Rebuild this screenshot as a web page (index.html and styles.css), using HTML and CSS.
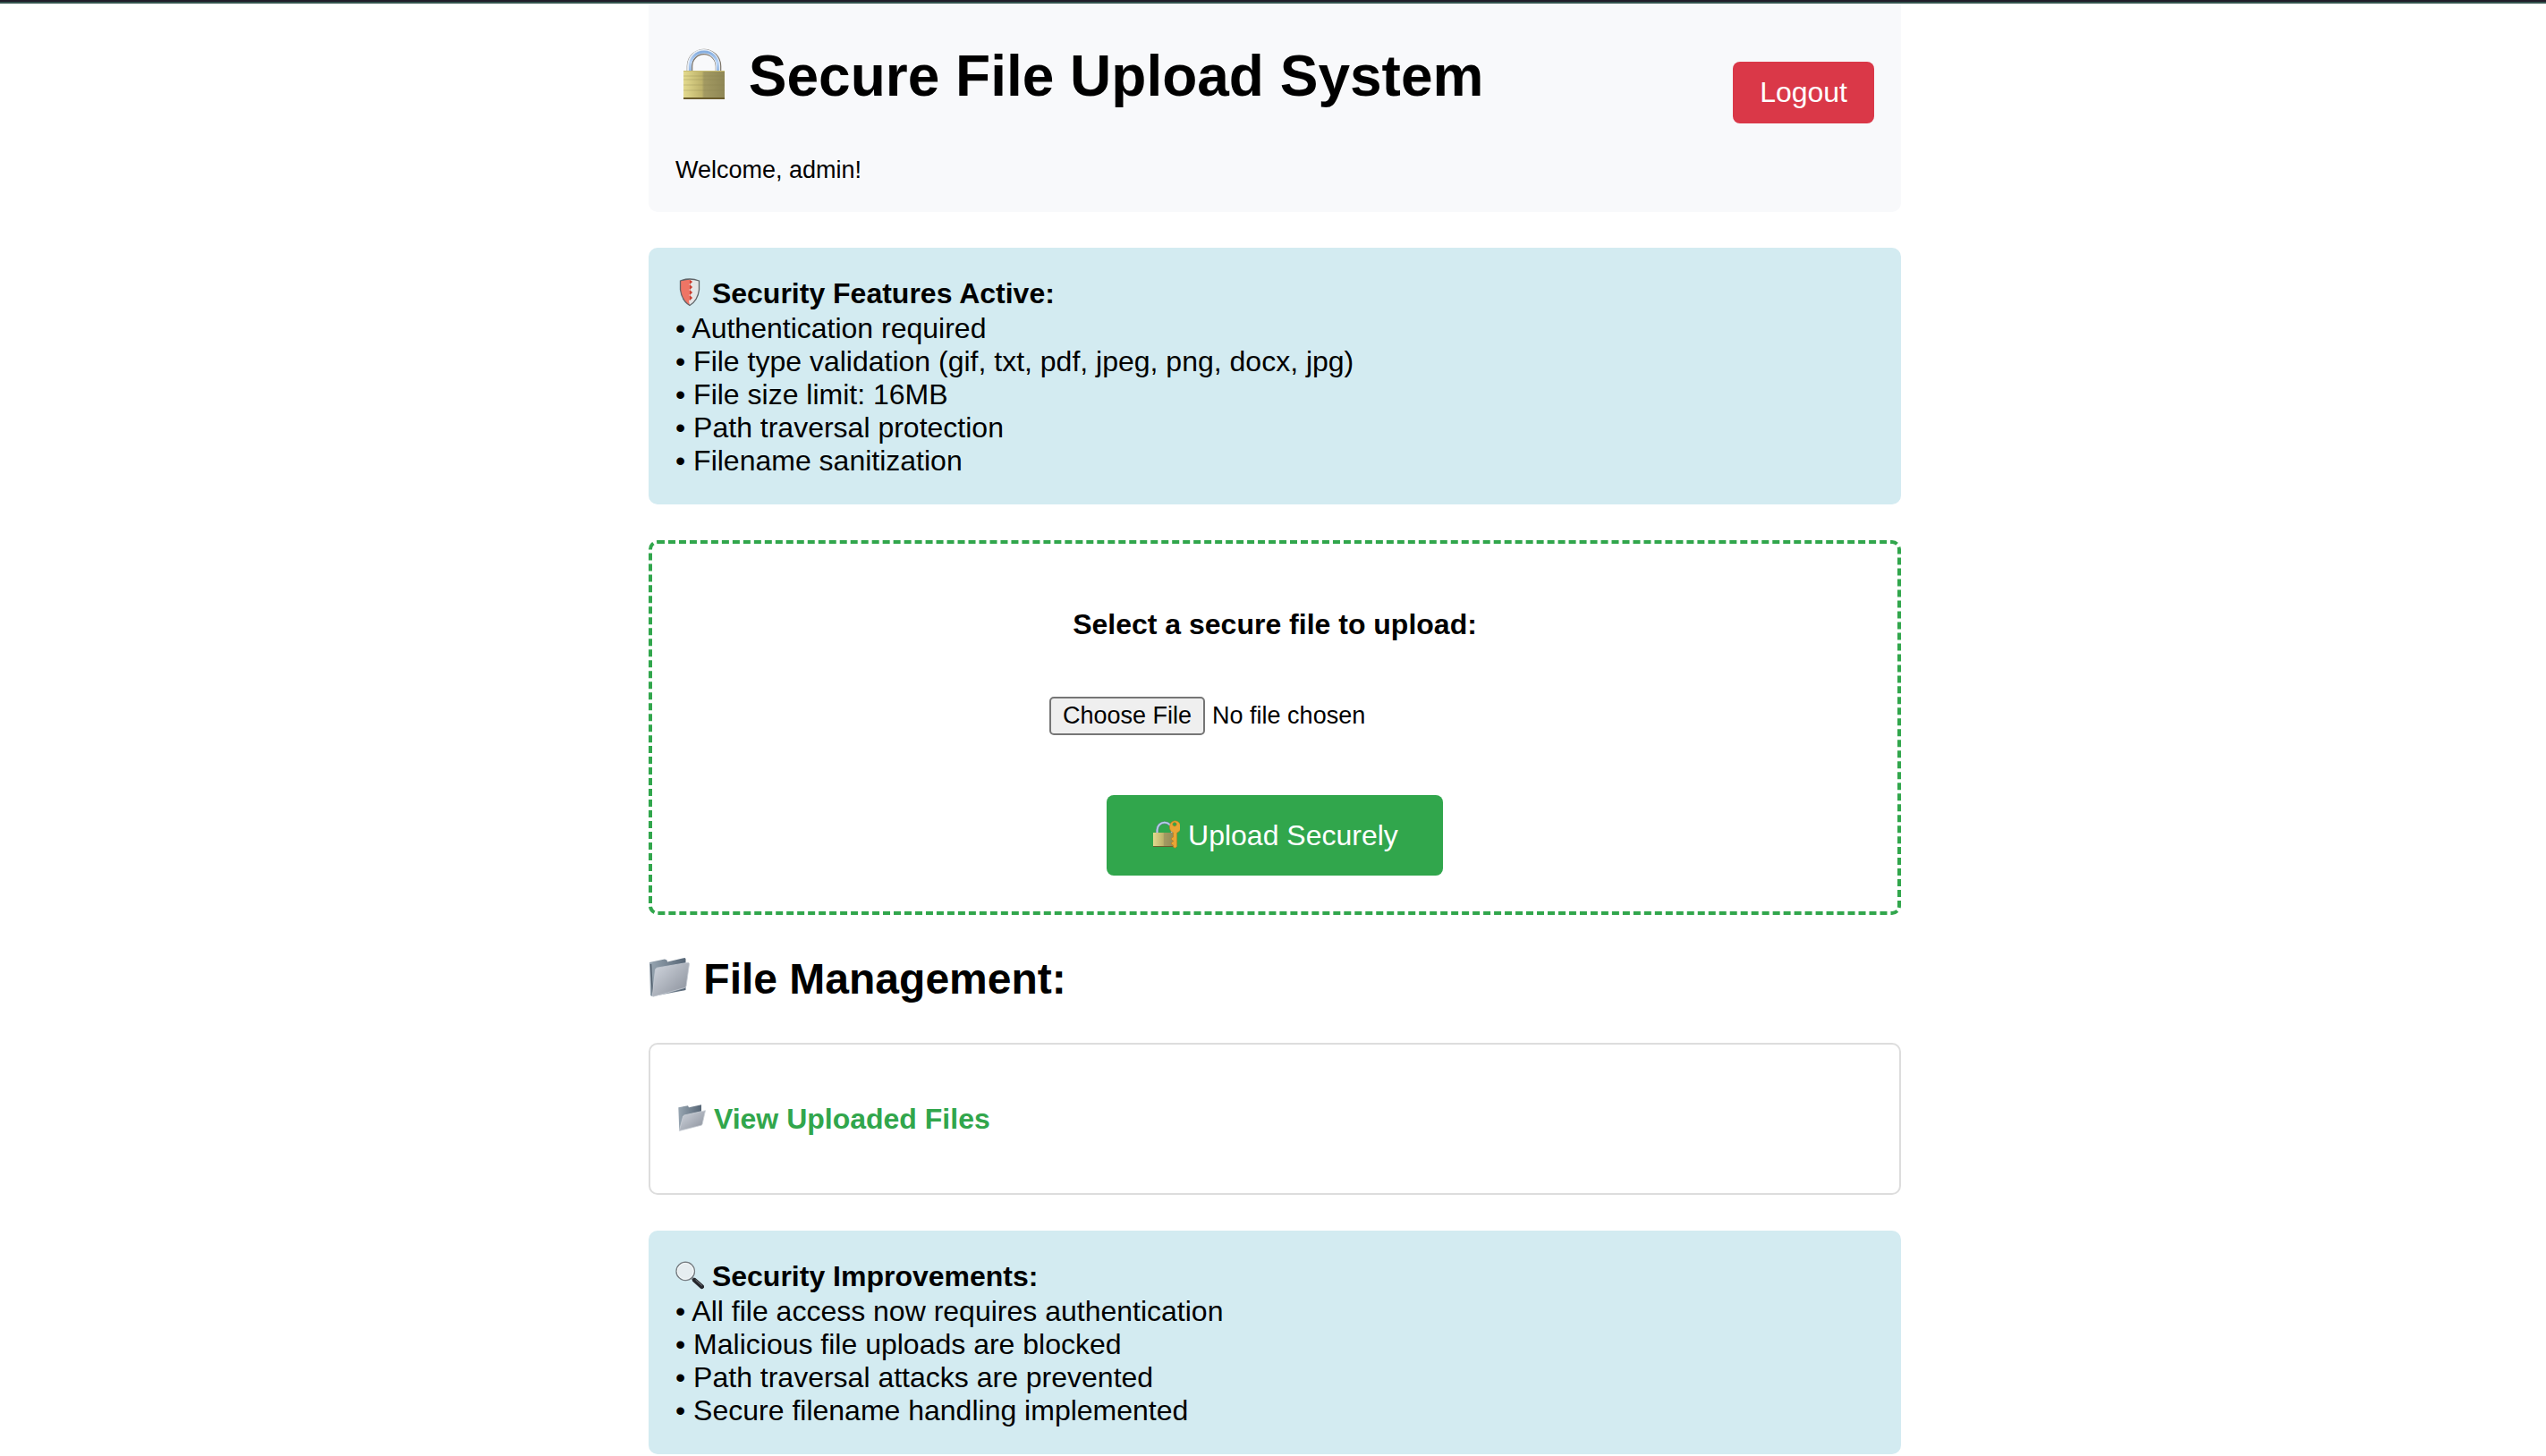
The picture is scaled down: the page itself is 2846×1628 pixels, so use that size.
FILE: index.html
```html
<!DOCTYPE html>
<html lang="en">
<head>
<meta charset="utf-8">
<meta name="viewport" content="width=device-width, initial-scale=1">
<title>Secure File Upload System</title>
<link rel="stylesheet" href="styles.css">
</head>
<body>
<div class="topbar"></div>
<main class="container">
  <header class="header">
    <div>
      <h1 class="title"><svg class="icon" viewBox="0 0 64 64" aria-hidden="true">
        <defs>
          <linearGradient id="brass" x1="0" x2="1" y1="0" y2="0"><stop offset="0" stop-color="#e3da8e"/><stop offset=".45" stop-color="#bdb26b"/><stop offset=".5" stop-color="#a39a62"/><stop offset="1" stop-color="#8f8755"/></linearGradient>
          <linearGradient id="steel" x1="0" x2="0" y1="0" y2="1"><stop offset="0" stop-color="#86aee0"/><stop offset=".5" stop-color="#b9d4f6"/><stop offset="1" stop-color="#8fb2dc"/></linearGradient>
          <linearGradient id="silver" x1="0" x2="1" y1="0" y2="1"><stop offset="0" stop-color="#d3d8e0"/><stop offset="1" stop-color="#878d98"/></linearGradient>
          <linearGradient id="slate" x1="0" x2="1" y1="0" y2="0"><stop offset="0" stop-color="#98a6b2"/><stop offset="1" stop-color="#566575"/></linearGradient>
        </defs>
        <path d="M16 30V23a16 16 0 0 1 32 0V30" fill="none" stroke="#7d7468" stroke-width="6.6"/>
        <path d="M15.600 30V22.600a16 16 0 0 1 32 0V30" fill="none" stroke="#e6edf5" stroke-width="5"/>
        <path d="M16.500 30V22.600a15.500 15.500 0 0 1 31 0V30" fill="none" stroke="url(#steel)" stroke-width="3"/>
        <rect x="9" y="28" width="46" height="32" rx="1" fill="url(#brass)"/>
        <path d="M9 34H55M9 38H55M9 44H55M9 50H55" stroke="#8c8350" stroke-width=".6" opacity=".5"/>
        <path d="M9 28.500H55" stroke="#c9bd72" stroke-width="1"/>
        <path d="M9 59H55" stroke="#6b5d2d" stroke-width="2"/>
      </svg> Secure File Upload System</h1>
      <p class="welcome">Welcome, admin!</p>
    </div>
    <a class="logout" href="#logout">Logout</a>
  </header>

  <section class="info">
    <strong class="info-title"><svg class="icon" viewBox="0 0 32 32" aria-hidden="true">
      <path d="M5.500 3Q16-1 26.500 3V13Q25 25 16 30.500Q7 25 5.500 13Z" fill="#e4e5e6"/>
      <path d="M5.500 3Q11 1 15 1L19 4l-4 3 4 3-4 3 4 3-4 3 4 3-4 3 1 5.500Q7 25 5.500 13Z" fill="#ee7565"/>
      <path d="M16 2l3 2-3 3 3 3-3 3 3 3-3 3 3 3-3 3V2Z" fill="#ca3e30"/>
      <path d="M5.500 3Q16-1 26.500 3V13Q25 25 16 30.500Q7 25 5.500 13Z" fill="none" stroke="#5f6468" stroke-width="1.300"/>
    </svg> Security Features Active:</strong>
    <ul class="info-list">
      <li>• Authentication required</li>
      <li>• File type validation (gif, txt, pdf, jpeg, png, docx, jpg)</li>
      <li>• File size limit: 16MB</li>
      <li>• Path traversal protection</li>
      <li>• Filename sanitization</li>
    </ul>
  </section>

  <form class="upload">
    <label class="upload-label" for="file">Select a secure file to upload:</label>
    <input class="upload-input" id="file" type="file">
    <button class="upload-button" type="button"><svg class="icon" viewBox="0 0 32 32" aria-hidden="true">
      <path d="M6.500 15V11a8.300 8.300 0 0 1 16.600 0V15" fill="none" stroke="#6f8494" stroke-width="3"/>
      <path d="M6.500 15V11a8.300 8.300 0 0 1 16.600 0V15" fill="none" stroke="#b5cfee" stroke-width="1.800"/>
      <rect x="2" y="14" width="25" height="16" fill="url(#brass)"/>
      <path d="M2 29.500H27" stroke="#6b5d2d"/>
      <path fill-rule="evenodd" d="M26 .8a7 7 0 0 1 2.600 13.400V29.500L26.500 31.300 24.500 30v-2l-2-1v-2l2-1v-1l-2-1v-2l2-1v-5A7 7 0 0 1 26 .8ZM26 2.500a2.200 2.200 0 1 0 .01 0Z" fill="#e9a535" stroke="#bc7b1c" stroke-width=".6"/>
    </svg> Upload Securely</button>
  </form>

  <h2 class="section-title"><svg class="icon" viewBox="0 0 48 48" aria-hidden="true">
    <path d="M1 7 18 3.500 20.500 4.500 21 6.500 40.500 2 41.500 3V38L4 45.300 2 44Z" fill="url(#slate)"/>
    <path d="M2.500 9 4.500 44" stroke="#53606e" stroke-width="1.500"/>
    <path d="M9 13.200 44.500 7.200 45.500 8.500 42 34 40.500 35.500 5 45.300 4.300 44 7.500 15Z" fill="url(#silver)" stroke="#c6ccd4" stroke-width=".8"/>
  </svg> File Management:</h2>

  <section class="card">
    <a class="card-link" href="#files"><svg class="icon" viewBox="0 0 32 32" aria-hidden="true">
      <path d="M1.300 4.300 12 2.300 13 4.300 27 1.300V24L2.300 30Z" fill="url(#slate)"/>
      <path d="M7.800 13 31.500 7.700 28 23.300 27 24.200 2.300 30.500 6.600 14Z" fill="url(#silver)" stroke="#ccd1d7" stroke-width=".8"/>
    </svg> View Uploaded Files</a>
  </section>

  <section class="info">
    <strong class="info-title"><svg class="icon" viewBox="0 0 32 32" aria-hidden="true">
      <path d="M18.500 19 22 22" stroke="#7b8085" stroke-width="3"/>
      <path d="M21.500 21.500 29.500 28.700" stroke="#25272c" stroke-width="5" stroke-linecap="round"/>
      <path d="M22.500 21 29.800 27.500" stroke="#777c85" stroke-width="1"/>
      <circle cx="11.200" cy="11.400" r="10.200" fill="#e6edf0" stroke="#777d82" stroke-width="1.400"/>
      <circle cx="11.200" cy="11.400" r="9" fill="none" stroke="#fafcfd" stroke-width=".8"/>
    </svg> Security Improvements:</strong>
    <ul class="info-list">
      <li>• All file access now requires authentication</li>
      <li>• Malicious file uploads are blocked</li>
      <li>• Path traversal attacks are prevented</li>
      <li>• Secure filename handling implemented</li>
    </ul>
  </section>
</main>
</body>
</html>
```
FILE: styles.css
```css
* {
  box-sizing: border-box;
}

body {
  margin: 0;
  background: #fff;
  color: #000;
  font-family: Arial, "Liberation Sans", sans-serif;
  font-size: 32px;
  line-height: 37px;
}

.topbar {
  height: 4px;
  background: #211d29;
  border-bottom: 2px solid #34534f;
}

.container {
  max-width: 1404px;
  margin: 0 auto;
  padding-left: 4px;
}

.icon {
  width: 1em;
  height: 1em;
  vertical-align: -0.125em;
}

.header {
  display: flex;
  justify-content: space-between;
  align-items: flex-start;
  margin-bottom: 40px;
  padding: 44px 30px 31px;
  background: #f8f9fb;
  border-radius: 0 0 10px 10px;
}

.title {
  margin: 0 0 53px;
  font-size: 64px;
  line-height: 74px;
}

.welcome {
  margin: 0;
  font-size: 27px;
  line-height: 31px;
}

.logout {
  margin-top: 21px;
  padding: 16px 30px;
  background: #da3848;
  border-radius: 8px;
  color: #fff;
  text-decoration: none;
}

.info {
  margin-bottom: 40px;
  padding: 30px;
  background: #d3ebf1;
  border-radius: 10px;
}

.info:last-child {
  margin-bottom: 0;
}

.info-title {
  display: block;
  line-height: 42px;
}

.info-list {
  margin: 0;
  padding: 0;
  list-style: none;
}

.upload {
  display: flex;
  flex-direction: column;
  align-items: center;
  padding: 72px 40px 40px;
  border: 4px dashed #31a64c;
  border-radius: 10px;
}

.upload-label {
  font-weight: bold;
}

.upload-input {
  width: 504px;
  margin: 62px 0 67px;
  font-family: inherit;
  font-size: 27px;
  line-height: 31px;
}

.upload-input::file-selector-button {
  margin: 0 8px 0 0;
  padding: 4px 13px;
  background: #efefef;
  border: 2px solid #767676;
  border-radius: 5px;
  color: #000;
  font: inherit;
}

.upload-button {
  padding: 24px 50px;
  background: #31a64c;
  border: 0;
  border-radius: 8px;
  color: #fff;
  font-family: inherit;
  font-size: 32px;
  line-height: 42px;
}

.section-title {
  margin: 44px 0;
  font-size: 48px;
  line-height: 55px;
}

.card {
  margin-bottom: 40px;
  padding: 62px 30px;
  border: 2px solid #ddd;
  border-radius: 10px;
}

.card-link {
  display: block;
  color: #31a64c;
  font-weight: bold;
  line-height: 42px;
  text-decoration: none;
}
```
